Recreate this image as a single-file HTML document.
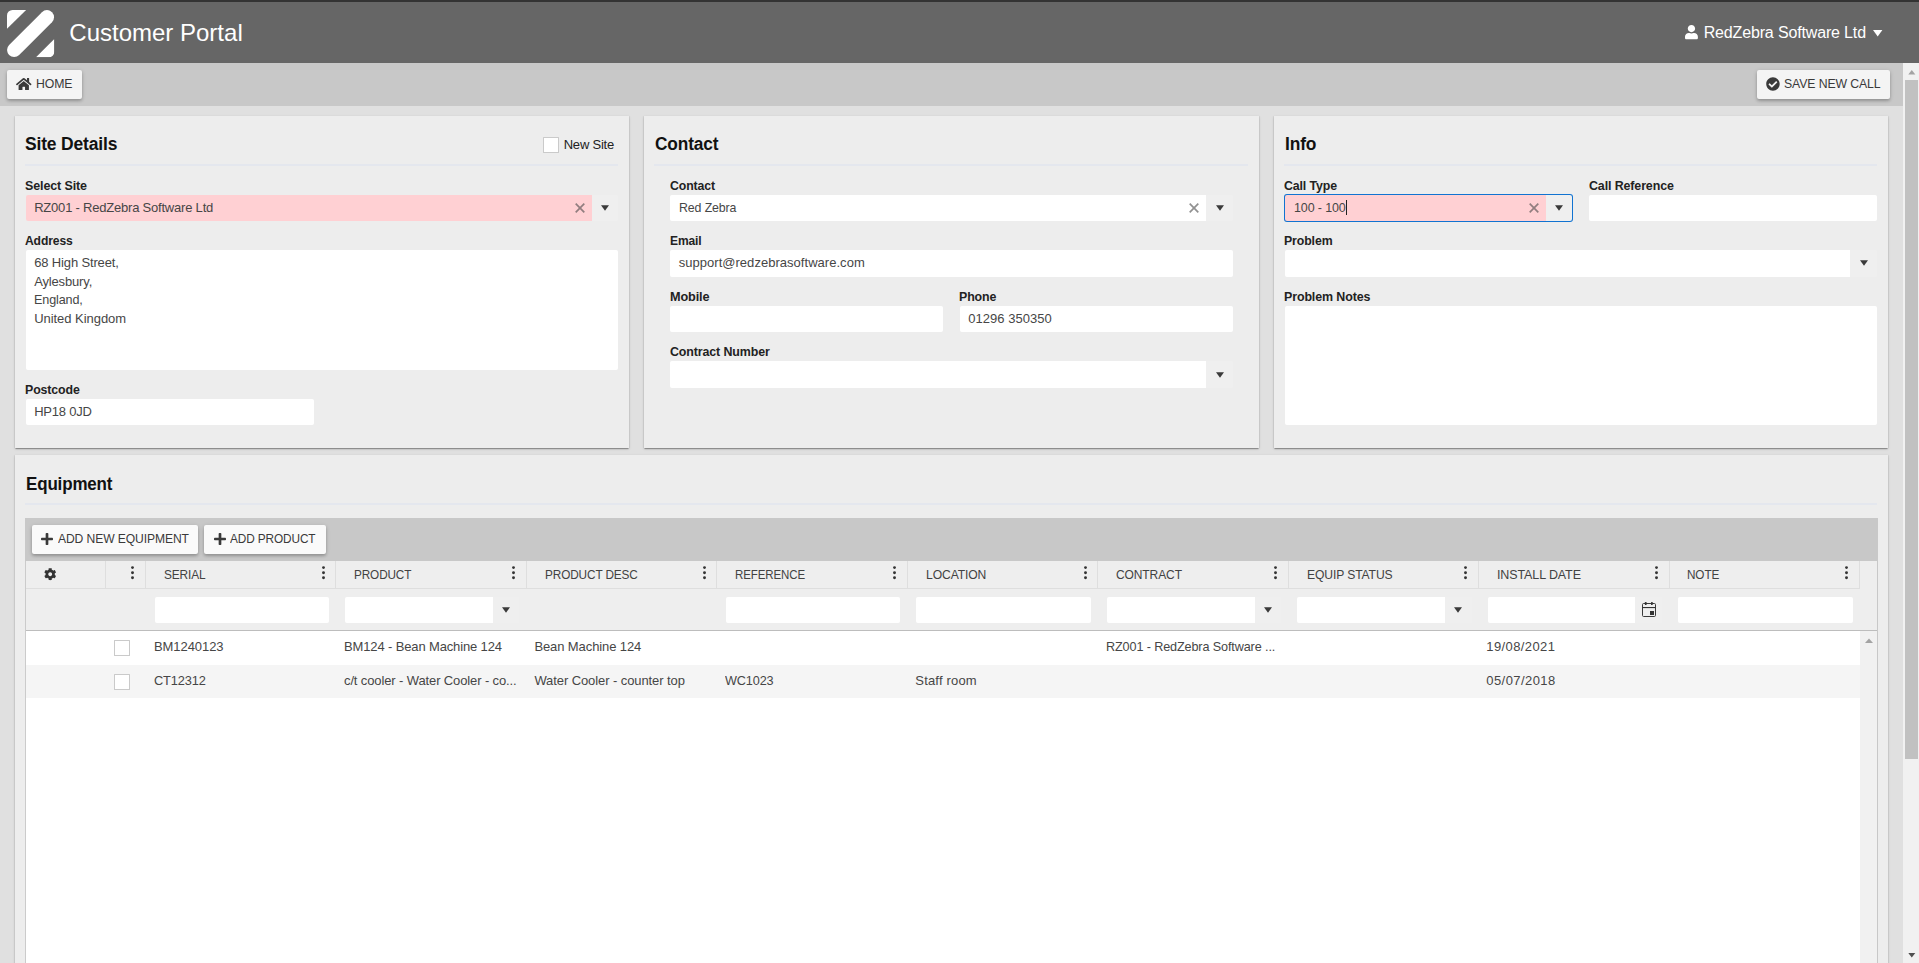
<!DOCTYPE html>
<html>
<head>
<meta charset="utf-8">
<title>Customer Portal</title>
<style>
*{box-sizing:border-box;margin:0;padding:0}
html,body{width:1919px;height:963px;overflow:hidden;background:#e0e0e0;font-family:"Liberation Sans",sans-serif;font-size:13px;color:#424242}
#root{position:absolute;left:0;top:0;width:1919px;height:963px;overflow:hidden}
.abs{position:absolute}
.t{position:absolute;white-space:nowrap;line-height:1}
svg{position:absolute;overflow:visible}
.btn{background:#f4f4f4;border-radius:2px;box-shadow:0 2px 3px rgba(0,0,0,.2),0 1px 5px rgba(0,0,0,.12)}
.btn2{background:#fafafa;border-radius:2px;box-shadow:0 2px 3px rgba(0,0,0,.2),0 1px 5px rgba(0,0,0,.12)}
.panel{background:#ededed;box-shadow:0 2px 1px -1px rgba(0,0,0,.2),0 1px 1px 0 rgba(0,0,0,.14),0 1px 3px 0 rgba(0,0,0,.12),1px 0 0 rgba(0,0,0,.04),-1px 0 0 rgba(0,0,0,.04)}
.hr{background:#e4e7ee}
.inp{background:#fff;border-radius:2px}
.inpl{background:#fff;border-radius:2px 0 0 2px}
.pink{background:#ffd0d3;border-radius:2px 0 0 2px}
.ddb{background:#efefef;border-radius:0 2px 2px 0}
.cb{background:#fff;border:1px solid #cacaca;border-radius:0.5px}
</style>
</head>
<body>
<div id="root">
<div class="abs panel" style="left:15px;top:116px;width:614px;height:332px;"></div>
<div class="abs panel" style="left:644px;top:116px;width:615px;height:332px;"></div>
<div class="abs panel" style="left:1274px;top:116px;width:614px;height:332px;"></div>
<div class="t" style="left:25.30px;top:134.56px;font-size:18px;letter-spacing:-0.166px;color:#111;transform:scaleX(0.9709);transform-origin:0 0;font-weight:bold;">Site Details</div>
<div class="abs hr" style="left:25px;top:164px;width:593px;height:2px;"></div>
<div class="abs cb" style="left:543px;top:137px;width:16px;height:16px;"></div>
<div class="t" style="left:563.70px;top:138.10px;font-size:13px;letter-spacing:-0.214px;color:#222;">New Site</div>
<div class="t" style="left:25.30px;top:179.00px;font-size:13px;letter-spacing:-0.120px;color:#222;transform:scaleX(0.9605);transform-origin:0 0;font-weight:bold;">Select Site</div>
<div class="abs pink" style="left:26px;top:195px;width:566px;height:26px;"></div>
<div class="abs ddb" style="left:592px;top:195px;width:26px;height:26px;"></div>
<div class="t" style="left:34.20px;top:200.90px;font-size:13px;letter-spacing:-0.211px;color:#464646;">RZ001 - RedZebra Software Ltd</div>
<svg style="left:574.7px;top:203px" width="10" height="10" viewBox="0 0 10 10"><path d="M0.7 0.7L9.3 9.3M9.3 0.7L0.7 9.3" stroke="#424242" stroke-opacity=".58" stroke-width="1.7" fill="none"/></svg>
<svg style="left:600.7px;top:205px" width="8" height="6" viewBox="0 0 8 6"><path d="M0 0.3H8L4 5.8Z" fill="#3a3a3a"/></svg>
<div class="t" style="left:25.30px;top:233.80px;font-size:13px;letter-spacing:-0.120px;color:#222;transform:scaleX(0.9302);transform-origin:0 0;font-weight:bold;">Address</div>
<div class="abs inp" style="left:26px;top:250px;width:592px;height:120px;"></div>
<div class="t" style="left:34.20px;top:256.10px;font-size:13px;letter-spacing:-0.146px;color:#464646;">68 High Street,</div>
<div class="t" style="left:34.20px;top:274.70px;font-size:13px;letter-spacing:-0.156px;color:#464646;">Aylesbury,</div>
<div class="t" style="left:34.20px;top:293.30px;font-size:13px;letter-spacing:-0.120px;color:#464646;transform:scaleX(0.9676);transform-origin:0 0;">England,</div>
<div class="t" style="left:34.20px;top:311.90px;font-size:13px;letter-spacing:-0.046px;color:#464646;">United Kingdom</div>
<div class="t" style="left:25.30px;top:383.00px;font-size:13px;letter-spacing:-0.120px;color:#222;transform:scaleX(0.9504);transform-origin:0 0;font-weight:bold;">Postcode</div>
<div class="abs inp" style="left:26px;top:399px;width:288px;height:26px;"></div>
<div class="t" style="left:34.20px;top:404.90px;font-size:13px;letter-spacing:-0.236px;color:#464646;">HP18 0JD</div>
<div class="t" style="left:654.50px;top:134.56px;font-size:18px;letter-spacing:-0.166px;color:#111;transform:scaleX(0.9606);transform-origin:0 0;font-weight:bold;">Contact</div>
<div class="abs hr" style="left:654px;top:164px;width:594px;height:2px;"></div>
<div class="t" style="left:669.70px;top:179.00px;font-size:13px;letter-spacing:-0.120px;color:#222;transform:scaleX(0.9443);transform-origin:0 0;font-weight:bold;">Contact</div>
<div class="abs inpl" style="left:670px;top:195px;width:536px;height:26px;"></div>
<div class="abs ddb" style="left:1206px;top:195px;width:27px;height:26px;"></div>
<div class="t" style="left:678.70px;top:200.90px;font-size:13px;letter-spacing:-0.120px;color:#464646;transform:scaleX(0.9498);transform-origin:0 0;">Red Zebra</div>
<svg style="left:1188.7px;top:203px" width="10" height="10" viewBox="0 0 10 10"><path d="M0.7 0.7L9.3 9.3M9.3 0.7L0.7 9.3" stroke="#424242" stroke-opacity=".58" stroke-width="1.7" fill="none"/></svg>
<svg style="left:1215.5px;top:205px" width="8" height="6" viewBox="0 0 8 6"><path d="M0 0.3H8L4 5.8Z" fill="#3a3a3a"/></svg>
<div class="t" style="left:669.70px;top:233.80px;font-size:13px;letter-spacing:-0.120px;color:#222;transform:scaleX(0.9255);transform-origin:0 0;font-weight:bold;">Email</div>
<div class="abs inp" style="left:670px;top:250px;width:563px;height:27px;"></div>
<div class="t" style="left:678.70px;top:256.10px;font-size:13px;letter-spacing:0.032px;color:#464646;">support@redzebrasoftware.com</div>
<div class="t" style="left:669.70px;top:289.50px;font-size:13px;letter-spacing:-0.120px;color:#222;transform:scaleX(0.9747);transform-origin:0 0;font-weight:bold;">Mobile</div>
<div class="abs inp" style="left:670px;top:306px;width:273px;height:26px;"></div>
<div class="t" style="left:959.00px;top:289.50px;font-size:13px;letter-spacing:-0.120px;color:#222;transform:scaleX(0.9524);transform-origin:0 0;font-weight:bold;">Phone</div>
<div class="abs inp" style="left:960px;top:306px;width:273px;height:26px;"></div>
<div class="t" style="left:968.30px;top:311.90px;font-size:13px;letter-spacing:0.025px;color:#464646;">01296 350350</div>
<div class="t" style="left:669.70px;top:345.00px;font-size:13px;letter-spacing:-0.120px;color:#222;transform:scaleX(0.9546);transform-origin:0 0;font-weight:bold;">Contract Number</div>
<div class="abs inpl" style="left:670px;top:361px;width:536px;height:27px;"></div>
<div class="abs ddb" style="left:1206px;top:361px;width:27px;height:27px;"></div>
<svg style="left:1215.5px;top:371.8px" width="8" height="6" viewBox="0 0 8 6"><path d="M0 0.3H8L4 5.8Z" fill="#3a3a3a"/></svg>
<div class="t" style="left:1284.50px;top:134.56px;font-size:18px;letter-spacing:-0.166px;color:#111;transform:scaleX(0.9661);transform-origin:0 0;font-weight:bold;">Info</div>
<div class="abs hr" style="left:1284px;top:164px;width:593px;height:2px;"></div>
<div class="t" style="left:1284.30px;top:179.00px;font-size:13px;letter-spacing:-0.120px;color:#222;transform:scaleX(0.9497);transform-origin:0 0;font-weight:bold;">Call Type</div>
<div class="abs " style="left:1284px;top:194px;width:289px;height:28px;background:#1173d1;border-radius:3px"></div>
<div class="abs pink" style="left:1285px;top:195px;width:261px;height:26px;"></div>
<div class="abs ddb" style="left:1546px;top:195px;width:26px;height:26px;"></div>
<div class="t" style="left:1293.80px;top:200.90px;font-size:13px;letter-spacing:-0.120px;color:#464646;transform:scaleX(0.9589);transform-origin:0 0;">100 - 100</div>
<div class="abs " style="left:1346px;top:200px;width:1px;height:15px;background:#222"></div>
<svg style="left:1528.8px;top:203px" width="10" height="10" viewBox="0 0 10 10"><path d="M0.7 0.7L9.3 9.3M9.3 0.7L0.7 9.3" stroke="#424242" stroke-opacity=".58" stroke-width="1.7" fill="none"/></svg>
<svg style="left:1555px;top:205px" width="8" height="6" viewBox="0 0 8 6"><path d="M0 0.3H8L4 5.8Z" fill="#3a3a3a"/></svg>
<div class="t" style="left:1588.60px;top:179.00px;font-size:13px;letter-spacing:-0.120px;color:#222;transform:scaleX(0.9559);transform-origin:0 0;font-weight:bold;">Call Reference</div>
<div class="abs inp" style="left:1589px;top:195px;width:288px;height:26px;"></div>
<div class="t" style="left:1284.30px;top:233.80px;font-size:13px;letter-spacing:-0.120px;color:#222;transform:scaleX(0.9477);transform-origin:0 0;font-weight:bold;">Problem</div>
<div class="abs inpl" style="left:1285px;top:250px;width:565px;height:27px;"></div>
<div class="abs ddb" style="left:1850px;top:250px;width:27px;height:27px;"></div>
<svg style="left:1859.9px;top:259.8px" width="8" height="6" viewBox="0 0 8 6"><path d="M0 0.3H8L4 5.8Z" fill="#3a3a3a"/></svg>
<div class="t" style="left:1284.30px;top:289.50px;font-size:13px;letter-spacing:-0.120px;color:#222;transform:scaleX(0.9567);transform-origin:0 0;font-weight:bold;">Problem Notes</div>
<div class="abs inp" style="left:1285px;top:306px;width:592px;height:119px;"></div>
<div class="abs panel" style="left:15px;top:455px;width:1873px;height:525px;"></div>
<div class="t" style="left:25.70px;top:474.76px;font-size:18px;letter-spacing:-0.166px;color:#111;transform:scaleX(0.9436);transform-origin:0 0;font-weight:bold;">Equipment</div>
<div class="abs hr" style="left:25px;top:503px;width:1852px;height:2px;"></div>
<div class="abs " style="left:25px;top:518px;width:1853px;height:462px;background:#fff;border-left:1px solid #cbcbcb;border-right:1px solid #c8c8c8"></div>
<div class="abs " style="left:25px;top:518px;width:1853px;height:43px;background:#c8c8c8"></div>
<div class="abs btn2" style="left:32px;top:525px;width:166px;height:29px;"></div>
<svg style="left:41px;top:532.8px" width="12" height="12" viewBox="0 0 12 12"><rect x="4.65" y="0" width="2.7" height="12" rx="0.8" fill="#3a3a3a"/><rect x="0" y="4.65" width="12" height="2.7" rx="0.8" fill="#3a3a3a"/></svg>
<div class="t" style="left:58.00px;top:532.20px;font-size:13px;letter-spacing:-0.120px;color:#3a3a3a;transform:scaleX(0.9328);transform-origin:0 0;">ADD NEW EQUIPMENT</div>
<div class="abs btn2" style="left:204px;top:525px;width:122px;height:29px;"></div>
<svg style="left:213.6px;top:532.8px" width="12" height="12" viewBox="0 0 12 12"><rect x="4.65" y="0" width="2.7" height="12" rx="0.8" fill="#3a3a3a"/><rect x="0" y="4.65" width="12" height="2.7" rx="0.8" fill="#3a3a3a"/></svg>
<div class="t" style="left:230.40px;top:532.20px;font-size:13px;letter-spacing:-0.120px;color:#3a3a3a;transform:scaleX(0.9089);transform-origin:0 0;">ADD PRODUCT</div>
<div class="abs " style="left:26px;top:561px;width:1851px;height:70px;background:#eee"></div>
<div class="abs " style="left:26px;top:588px;width:1834px;height:1px;background:#dedede"></div>
<div class="abs " style="left:26px;top:630px;width:1851px;height:1px;background:#bdbdbd"></div>
<div class="abs " style="left:105px;top:561px;width:1px;height:28px;background:#dedede"></div>
<div class="abs " style="left:145px;top:561px;width:1px;height:28px;background:#dedede"></div>
<div class="abs " style="left:335px;top:561px;width:1px;height:28px;background:#dedede"></div>
<div class="abs " style="left:526px;top:561px;width:1px;height:28px;background:#dedede"></div>
<div class="abs " style="left:716px;top:561px;width:1px;height:28px;background:#dedede"></div>
<div class="abs " style="left:907px;top:561px;width:1px;height:28px;background:#dedede"></div>
<div class="abs " style="left:1097px;top:561px;width:1px;height:28px;background:#dedede"></div>
<div class="abs " style="left:1288px;top:561px;width:1px;height:28px;background:#dedede"></div>
<div class="abs " style="left:1478px;top:561px;width:1px;height:28px;background:#dedede"></div>
<div class="abs " style="left:1669px;top:561px;width:1px;height:28px;background:#dedede"></div>
<div class="abs " style="left:1859px;top:561px;width:1px;height:28px;background:#dedede"></div>
<svg style="left:44.3px;top:567.8px" width="12.4" height="12.4" viewBox="0 0 512 512"><path fill="#333" d="M487.4 315.7l-42.6-24.6c4.3-23.2 4.3-47 0-70.2l42.6-24.6c4.9-2.8 7.1-8.6 5.5-14-11.1-35.6-30-67.8-54.7-94.6-3.8-4.100-10-5.100-14.800-2.300L380.8 110c-17.900-15.400-38.500-27.300-60.800-35.100V25.800c0-5.600-3.900-10.500-9.400-11.700-36.700-8.200-74.300-7.800-109.200 0-5.500 1.200-9.400 6.100-9.400 11.700V75c-22.200 7.900-42.800 19.800-60.800 35.100L88.700 85.500c-4.900-2.800-11-1.900-14.800 2.300-24.700 26.700-43.600 58.900-54.700 94.600-1.700 5.400.6 11.200 5.500 14L67.300 221c-4.300 23.200-4.300 47 0 70.200l-42.600 24.600c-4.900 2.800-7.100 8.600-5.500 14 11.100 35.600 30 67.800 54.700 94.600 3.800 4.100 10 5.100 14.800 2.300l42.600-24.600c17.900 15.400 38.500 27.300 60.800 35.100v49.200c0 5.600 3.900 10.500 9.400 11.700 36.700 8.200 74.300 7.800 109.200 0 5.500-1.200 9.400-6.100 9.400-11.700v-49.200c22.200-7.900 42.800-19.800 60.800-35.100l42.600 24.600c4.900 2.800 11 1.900 14.800-2.300 24.700-26.700 43.600-58.900 54.700-94.600 1.500-5.500-.7-11.300-5.600-14.100zM256 336c-44.100 0-80-35.900-80-80s35.900-80 80-80 80 35.900 80 80-35.900 80-80 80z"/></svg>
<svg style="left:131.3px;top:565.8px" width="3" height="14" viewBox="0 0 3 14"><circle cx="1.5" cy="1.6" r="1.45" fill="#333"/><circle cx="1.5" cy="6.7" r="1.45" fill="#333"/><circle cx="1.5" cy="11.8" r="1.45" fill="#333"/></svg>
<div class="t" style="left:164.00px;top:568.10px;font-size:13px;letter-spacing:-0.120px;color:#424242;transform:scaleX(0.9135);transform-origin:0 0;">SERIAL</div>
<svg style="left:321.7px;top:565.8px" width="3" height="14" viewBox="0 0 3 14"><circle cx="1.5" cy="1.6" r="1.45" fill="#333"/><circle cx="1.5" cy="6.7" r="1.45" fill="#333"/><circle cx="1.5" cy="11.8" r="1.45" fill="#333"/></svg>
<div class="t" style="left:354.30px;top:568.10px;font-size:13px;letter-spacing:-0.120px;color:#424242;transform:scaleX(0.9035);transform-origin:0 0;">PRODUCT</div>
<svg style="left:512.1999999999999px;top:565.8px" width="3" height="14" viewBox="0 0 3 14"><circle cx="1.5" cy="1.6" r="1.45" fill="#333"/><circle cx="1.5" cy="6.7" r="1.45" fill="#333"/><circle cx="1.5" cy="11.8" r="1.45" fill="#333"/></svg>
<div class="t" style="left:544.50px;top:568.10px;font-size:13px;letter-spacing:-0.120px;color:#424242;transform:scaleX(0.9060);transform-origin:0 0;">PRODUCT DESC</div>
<svg style="left:702.5999999999999px;top:565.8px" width="3" height="14" viewBox="0 0 3 14"><circle cx="1.5" cy="1.6" r="1.45" fill="#333"/><circle cx="1.5" cy="6.7" r="1.45" fill="#333"/><circle cx="1.5" cy="11.8" r="1.45" fill="#333"/></svg>
<div class="t" style="left:735.00px;top:568.10px;font-size:13px;letter-spacing:-0.120px;color:#424242;transform:scaleX(0.8842);transform-origin:0 0;">REFERENCE</div>
<svg style="left:893.0px;top:565.8px" width="3" height="14" viewBox="0 0 3 14"><circle cx="1.5" cy="1.6" r="1.45" fill="#333"/><circle cx="1.5" cy="6.7" r="1.45" fill="#333"/><circle cx="1.5" cy="11.8" r="1.45" fill="#333"/></svg>
<div class="t" style="left:925.60px;top:568.10px;font-size:13px;letter-spacing:-0.120px;color:#424242;transform:scaleX(0.9341);transform-origin:0 0;">LOCATION</div>
<svg style="left:1083.5px;top:565.8px" width="3" height="14" viewBox="0 0 3 14"><circle cx="1.5" cy="1.6" r="1.45" fill="#333"/><circle cx="1.5" cy="6.7" r="1.45" fill="#333"/><circle cx="1.5" cy="11.8" r="1.45" fill="#333"/></svg>
<div class="t" style="left:1116.00px;top:568.10px;font-size:13px;letter-spacing:-0.120px;color:#424242;transform:scaleX(0.9242);transform-origin:0 0;">CONTRACT</div>
<svg style="left:1273.8999999999999px;top:565.8px" width="3" height="14" viewBox="0 0 3 14"><circle cx="1.5" cy="1.6" r="1.45" fill="#333"/><circle cx="1.5" cy="6.7" r="1.45" fill="#333"/><circle cx="1.5" cy="11.8" r="1.45" fill="#333"/></svg>
<div class="t" style="left:1306.60px;top:568.10px;font-size:13px;letter-spacing:-0.120px;color:#424242;transform:scaleX(0.9322);transform-origin:0 0;">EQUIP STATUS</div>
<svg style="left:1464.3px;top:565.8px" width="3" height="14" viewBox="0 0 3 14"><circle cx="1.5" cy="1.6" r="1.45" fill="#333"/><circle cx="1.5" cy="6.7" r="1.45" fill="#333"/><circle cx="1.5" cy="11.8" r="1.45" fill="#333"/></svg>
<div class="t" style="left:1497.00px;top:568.10px;font-size:13px;letter-spacing:-0.120px;color:#424242;transform:scaleX(0.9621);transform-origin:0 0;">INSTALL DATE</div>
<svg style="left:1654.8px;top:565.8px" width="3" height="14" viewBox="0 0 3 14"><circle cx="1.5" cy="1.6" r="1.45" fill="#333"/><circle cx="1.5" cy="6.7" r="1.45" fill="#333"/><circle cx="1.5" cy="11.8" r="1.45" fill="#333"/></svg>
<div class="t" style="left:1687.40px;top:568.10px;font-size:13px;letter-spacing:-0.120px;color:#424242;transform:scaleX(0.9031);transform-origin:0 0;">NOTE</div>
<svg style="left:1845.2px;top:565.8px" width="3" height="14" viewBox="0 0 3 14"><circle cx="1.5" cy="1.6" r="1.45" fill="#333"/><circle cx="1.5" cy="6.7" r="1.45" fill="#333"/><circle cx="1.5" cy="11.8" r="1.45" fill="#333"/></svg>
<div class="abs inp" style="left:155px;top:597px;width:174px;height:26px;"></div>
<div class="abs inpl" style="left:345px;top:597px;width:148px;height:26px;"></div>
<div class="abs ddb" style="left:493px;top:597px;width:26px;height:26px;"></div>
<svg style="left:501.7px;top:607px" width="8" height="6" viewBox="0 0 8 6"><path d="M0 0.3H8L4 5.8Z" fill="#3a3a3a"/></svg>
<div class="abs inp" style="left:726px;top:597px;width:174px;height:26px;"></div>
<div class="abs inp" style="left:916px;top:597px;width:175px;height:26px;"></div>
<div class="abs inpl" style="left:1107px;top:597px;width:148px;height:26px;"></div>
<div class="abs ddb" style="left:1255px;top:597px;width:26px;height:26px;"></div>
<svg style="left:1263.8px;top:607px" width="8" height="6" viewBox="0 0 8 6"><path d="M0 0.3H8L4 5.8Z" fill="#3a3a3a"/></svg>
<div class="abs inpl" style="left:1297px;top:597px;width:148px;height:26px;"></div>
<div class="abs ddb" style="left:1445px;top:597px;width:27px;height:26px;"></div>
<svg style="left:1454px;top:607px" width="8" height="6" viewBox="0 0 8 6"><path d="M0 0.3H8L4 5.8Z" fill="#3a3a3a"/></svg>
<div class="abs inpl" style="left:1488px;top:597px;width:147px;height:26px;"></div>
<div class="abs ddb" style="left:1635px;top:597px;width:27px;height:26px;"></div>
<svg style="left:1642px;top:602px" width="14" height="15" viewBox="0 0 14 15"><rect x="0.5" y="1.5" width="13" height="13" rx="1.1" fill="none" stroke="#3a3a3a" stroke-width="1"/><rect x="0.5" y="5" width="13" height="1.1" fill="#333"/><rect x="2.9" y="0" width="1.7" height="3.1" rx="0.6" fill="#333"/><rect x="9" y="0" width="1.7" height="3.1" rx="0.6" fill="#333"/><rect x="8" y="9" width="4" height="4" fill="#333"/></svg>
<div class="abs inp" style="left:1678px;top:597px;width:175px;height:26px;"></div>
<div class="abs " style="left:26px;top:665px;width:1834px;height:33px;background:#f5f5f5"></div>
<div class="abs " style="left:1860px;top:631px;width:17px;height:349px;background:#f1f1f1"></div>
<svg style="left:1864.5px;top:637.5px" width="8" height="5" viewBox="0 0 8 5"><path d="M0 5L4 0.5L8 5Z" fill="#a3a3a3"/></svg>
<div class="abs cb" style="left:114px;top:640px;width:16px;height:16px;"></div>
<div class="abs cb" style="left:114px;top:674px;width:16px;height:16px;"></div>
<div class="t" style="left:154.00px;top:640.10px;font-size:13px;letter-spacing:-0.066px;color:#464646;">BM1240123</div>
<div class="t" style="left:344.00px;top:640.10px;font-size:13px;letter-spacing:-0.136px;color:#464646;">BM124 - Bean Machine 124</div>
<div class="t" style="left:534.40px;top:640.10px;font-size:13px;letter-spacing:-0.098px;color:#464646;">Bean Machine 124</div>
<div class="t" style="left:1105.70px;top:640.10px;font-size:13px;letter-spacing:-0.120px;color:#464646;transform:scaleX(0.9708);transform-origin:0 0;">RZ001 - RedZebra Software ...</div>
<div class="t" style="left:1486.30px;top:640.10px;font-size:13px;letter-spacing:0.397px;color:#464646;">19/08/2021</div>
<div class="t" style="left:154.00px;top:674.00px;font-size:13px;letter-spacing:-0.120px;color:#464646;transform:scaleX(0.9833);transform-origin:0 0;">CT12312</div>
<div class="t" style="left:344.00px;top:674.00px;font-size:13px;letter-spacing:-0.119px;color:#464646;">c/t cooler - Water Cooler - co...</div>
<div class="t" style="left:534.40px;top:674.00px;font-size:13px;letter-spacing:-0.086px;color:#464646;">Water Cooler - counter top</div>
<div class="t" style="left:725.00px;top:674.00px;font-size:13px;letter-spacing:-0.120px;color:#464646;transform:scaleX(0.9735);transform-origin:0 0;">WC1023</div>
<div class="t" style="left:915.30px;top:674.00px;font-size:13px;letter-spacing:0.183px;color:#464646;">Staff room</div>
<div class="t" style="left:1486.30px;top:674.00px;font-size:13px;letter-spacing:0.431px;color:#464646;">05/07/2018</div>
<div class="abs " style="left:0px;top:0px;width:1919px;height:2px;background:#333"></div>
<div class="abs " style="left:0px;top:2px;width:1919px;height:61px;background:#666"></div>
<div class="abs " style="left:0px;top:63px;width:1903px;height:43px;background:#c8c8c8"></div>
<svg style="left:6.8px;top:9.9px" width="47.3" height="47.3" viewBox="0 0 47 47"><defs><clipPath id="lg"><rect x="0" y="0" width="47" height="47" rx="5.5"/></clipPath></defs><g clip-path="url(#lg)" fill="#fff"><path d="M0 0H19L0 18.6Z"/><path d="M47 28.8V47H28.8Z"/><path d="M7.1 39.7L39.7 7.1" stroke="#fff" stroke-width="14.1" stroke-linecap="round" fill="none"/></g></svg>
<div class="t" style="left:69.30px;top:20.98px;font-size:24px;letter-spacing:0.002px;color:#fff;">Customer Portal</div>
<svg style="left:1685px;top:25px" width="12.9" height="14.3" viewBox="0 0 448 512" preserveAspectRatio="none"><path fill="#fff" d="M224 256c70.7 0 128-57.3 128-128S294.7 0 224 0 96 57.3 96 128s57.3 128 128 128zm89.6 32h-16.7c-22.2 10.2-46.9 16-72.9 16s-50.6-5.8-72.9-16h-16.7C60.2 288 0 348.2 0 422.4V464c0 26.5 21.5 48 48 48h352c26.5 0 48-21.5 48-48v-41.6c0-74.200-60.200-134.400-134.400-134.400z"/></svg>
<div class="t" style="left:1703.70px;top:24.56px;font-size:16px;letter-spacing:-0.154px;color:#fff;">RedZebra Software Ltd</div>
<svg style="left:1873.4px;top:29.9px" width="9.4" height="6.4" viewBox="0 0 9.4 6.4"><path d="M0 0H9.4L4.7 6.4Z" fill="#fff"/></svg>
<div class="abs btn" style="left:7px;top:70px;width:75px;height:29px;"></div>
<svg style="left:16px;top:77.7px" width="15.5" height="12.1" viewBox="0 32 576 448"><path fill="#3a3a3a" d="M280.37 148.26L96 300.11V464a16 16 0 0 0 16 16l112.06-.29a16 16 0 0 0 15.92-16V368a16 16 0 0 1 16-16h64a16 16 0 0 1 16 16v95.64a16 16 0 0 0 16 16.05L464 480a16 16 0 0 0 16-16V300L295.67 148.26a12.19 12.19 0 0 0-15.3 0zM571.6 251.47L488 182.56V44.05a12 12 0 0 0-12-12h-56a12 12 0 0 0-12 12v72.61L318.47 43a48 48 0 0 0-61 0L4.34 251.47a12 12 0 0 0-1.6 16.9l25.5 31A12 12 0 0 0 45.15 301l235.22-193.74a12.19 12.190 0 0 1 15.300 0L530.9 301a12 12 0 0 0 16.900-1.600l25.500-31a12 12 0 0 0-1.700-16.930z"/></svg>
<div class="t" style="left:36.30px;top:76.90px;font-size:13px;letter-spacing:-0.120px;color:#3a3a3a;transform:scaleX(0.9446);transform-origin:0 0;">HOME</div>
<div class="abs btn" style="left:1757px;top:70px;width:133px;height:29px;"></div>
<svg style="left:1766.3px;top:76.8px" width="13.9" height="13.9" viewBox="0 0 512 512"><path fill="#3a3a3a" d="M504 256c0 136.967-111.033 248-248 248S8 392.967 8 256 119.033 8 256 8s248 111.033 248 248zM227.314 387.314l184-184c6.248-6.248 6.248-16.379 0-22.627l-22.627-22.627c-6.248-6.249-16.379-6.249-22.628 0L216 308.118l-70.059-70.059c-6.248-6.248-16.379-6.248-22.628 0l-22.627 22.627c-6.248 6.248-6.248 16.379 0 22.627l104 104c6.249 6.249 16.379 6.249 22.628.001z"/></svg>
<div class="t" style="left:1784.40px;top:77.00px;font-size:13px;letter-spacing:-0.120px;color:#3a3a3a;transform:scaleX(0.9432);transform-origin:0 0;">SAVE NEW CALL</div>
<div class="abs " style="left:1903px;top:63px;width:16px;height:900px;background:#f1f1f1"></div>
<div class="abs " style="left:1905px;top:80px;width:13px;height:679px;background:#c1c1c1"></div>
<svg style="left:1907.7px;top:69.6px" width="7.6" height="4.4" viewBox="0 0 8 5"><path d="M0 5L4 0L8 5Z" fill="#a3a3a3"/></svg>
<svg style="left:1907.7px;top:952.8px" width="7.6" height="4.4" viewBox="0 0 8 5"><path d="M0 0H8L4 5Z" fill="#505050"/></svg>
</div>
</body>
</html>
